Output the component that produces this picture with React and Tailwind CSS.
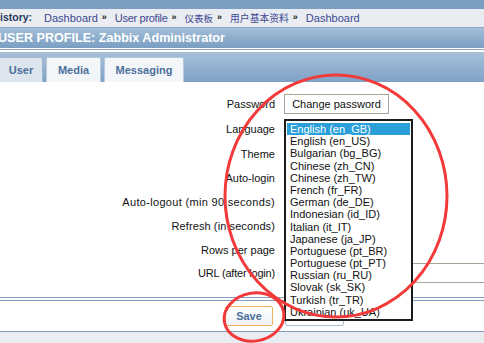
import React from "react";

const languages = [
  "English (en_GB)",
  "English (en_US)",
  "Bulgarian (bg_BG)",
  "Chinese (zh_CN)",
  "Chinese (zh_TW)",
  "French (fr_FR)",
  "German (de_DE)",
  "Indonesian (id_ID)",
  "Italian (it_IT)",
  "Japanese (ja_JP)",
  "Portuguese (pt_BR)",
  "Portuguese (pt_PT)",
  "Russian (ru_RU)",
  "Slovak (sk_SK)",
  "Turkish (tr_TR)",
  "Ukrainian (uk_UA)",
];

const rows = [
  { label: "Password", h: "h-[24px]", t: "" },
  { label: "Language", h: "h-[26px]", t: "" },
  { label: "Theme", h: "h-[24px]", t: "" },
  { label: "Auto-login", h: "h-[24px]", t: "" },
  { label: "Auto-logout (min 90 seconds)", h: "h-[24px]", t: "tracking-[0.32px]" },
  { label: "Refresh (in seconds)", h: "h-[24px]", t: "tracking-[0.1px]" },
  { label: "Rows per page", h: "h-[24px]", t: "" },
  { label: "URL (after login)", h: "h-[22px]", t: "tracking-[-0.2px]" },
];

const Sep = () => <span className="ml-[4px] mr-[8px] text-[9px] font-bold text-[#222]">»</span>;

const App = () => {
  return (
    <div className="relative w-[484px] h-[343px] overflow-hidden bg-white font-['Liberation_Sans','Noto_Sans_CJK_SC',sans-serif] text-[11px] text-[#111]">
      {/* top strip */}
      <div className="h-[9px] bg-[#7b9fc3]"></div>

      {/* breadcrumb */}
      <div className="h-[19px] bg-[#e9edf2] border-b border-[#8aa6c4] flex items-center whitespace-nowrap text-[#3e4891]">
        <span className="w-[44px] font-bold text-[#2b3a63] text-[10.5px]">istory:</span>
        <span>Dashboard</span>
        <Sep />
        <span className="tracking-[-0.3px]">User profile</span>
        <Sep />
        <span className="font-['Noto_Sans_CJK_SC'] text-[9.5px]">仪表板</span>
        <Sep />
        <span className="font-['Noto_Sans_CJK_SC'] text-[9.8px]">用户基本资料</span>
        <Sep />
        <span>Dashboard</span>
      </div>

      {/* title bar */}
      <div className="h-[20px] bg-gradient-to-b from-[#a3bed8] to-[#7a9ec2] flex items-center whitespace-nowrap">
        <span className="-ml-[2px] text-white font-bold text-[12.6px]">USER PROFILE: Zabbix Administrator</span>
      </div>
      <div className="h-[1px] bg-white"></div>
      <div className="h-[1px] bg-[#8aa6c4]"></div>
      <div className="h-[2px] bg-white"></div>

      {/* tabs */}
      <div className="h-[30px] bg-gradient-to-b from-[#a8c1d9] to-[#7ea2c6] flex items-end gap-[3px]">
        <div className="-ml-[1px] w-[44px] h-[25px] bg-[#dce4ed] border border-b-0 border-[#9fb5cc] rounded-t-[2px] flex items-center justify-center font-bold text-[#4c6f9c]">
          User
        </div>
        <div className="w-[55px] h-[25px] bg-[#f3f6f9] border border-b-0 border-[#b7c9da] rounded-t-[2px] flex items-center justify-center font-bold text-[#4c6f9c]">
          Media
        </div>
        <div className="w-[80px] h-[25px] bg-[#f3f6f9] border border-b-0 border-[#b7c9da] rounded-t-[2px] flex items-center justify-center font-bold text-[#4c6f9c]">
          Messaging
        </div>
      </div>

      {/* form */}
      <div className="h-[215px] pt-[10px]">
        {rows.map((r, i) => (
          <div key={r.label} className={`flex items-center ${r.h}`}>
            <div className={`w-[276px] shrink-0 text-right pr-[1px] whitespace-nowrap ${r.t}`}>{r.label}</div>
            <div className="ml-[8px] shrink-0 flex items-center">
              {i === 0 && (
                <div className="h-[20px] w-[105px] border border-[#a8a597] bg-white flex items-center justify-center">
                  Change password
                </div>
              )}
              {i === 7 && <div className="h-[20px] w-[260px] border border-[#a8a597] bg-white"></div>}
            </div>
          </div>
        ))}
      </div>

      {/* footer */}
      <div className="h-[1px] bg-[#7f9cbd]"></div>
      <div className="h-[2px] bg-white"></div>
      <div className="h-[1px] bg-[#7f9cbd]"></div>
      <div className="h-[30px] flex items-center">
        <div className="ml-[225px] w-[48px] h-[20px] border border-[#f4b266] rounded-[2px] bg-gradient-to-b from-white to-[#eef2f6] flex items-center justify-center font-bold text-[#4c6e99]">
          Save
        </div>
        <div className="ml-[12px] w-[59px] h-[20px] border border-[#a9bdd2] rounded-[2px] bg-white"></div>
      </div>
      <div className="h-[1px] bg-[#7f9cbd]"></div>
      <div className="h-[20px] bg-[#e9edf2]"></div>

      {/* open language list */}
      <div className="absolute left-[284px] top-[119px] w-[129px] h-[202px] border-2 border-[#1c1c1c] bg-white pt-[2px] px-[1px] overflow-hidden">
        {languages.map((l, i) => (
          <div
            key={l}
            className={`h-[12.2px] leading-[12px] pl-[3px] whitespace-nowrap ${
              i === 0 ? "bg-[#2a9fd9] text-white" : "text-[#111]"
            }`}
          >
            {l}
          </div>
        ))}
      </div>

      {/* red annotation marks */}
      <svg className="absolute inset-0 pointer-events-none" width="484" height="343" viewBox="0 0 484 343">
        <ellipse cx="336" cy="196" rx="111" ry="121" fill="none" stroke="#f23a3a" strokeWidth="3" />
        <ellipse cx="254" cy="317" rx="30" ry="24" fill="none" stroke="#f23a3a" strokeWidth="3" transform="rotate(-10 254 317)" />
      </svg>
    </div>
  );
};

export default App;
